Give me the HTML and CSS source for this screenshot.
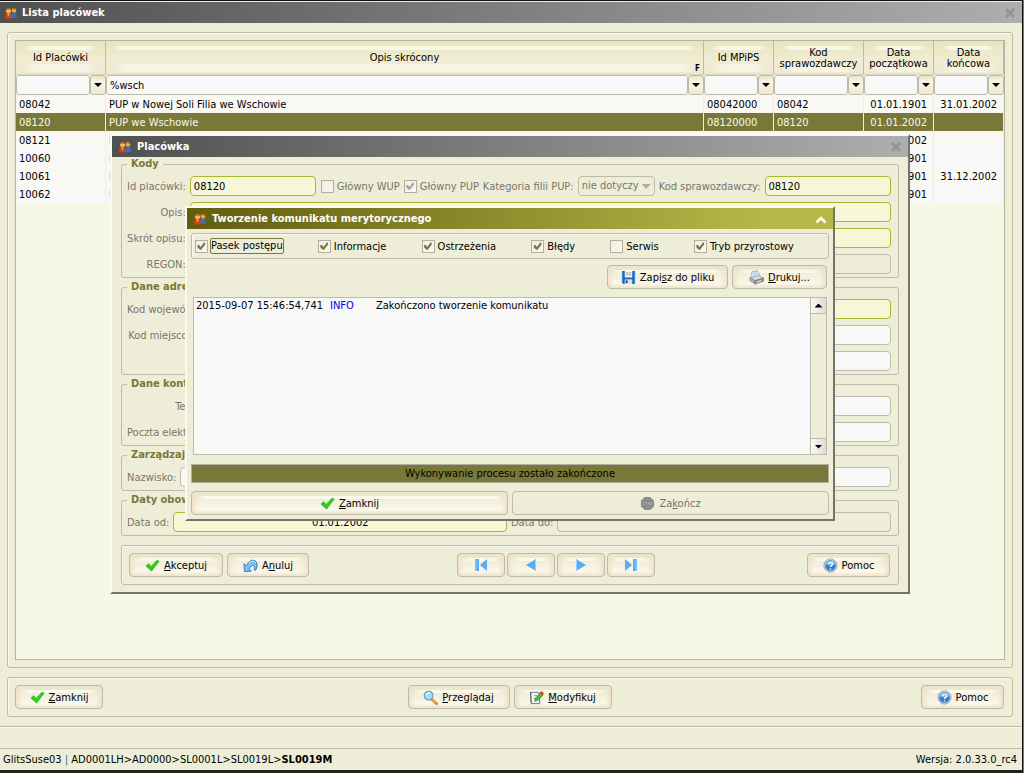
FILE: index.html
```html
<!DOCTYPE html>
<html lang="pl">
<head>
    <meta charset="UTF-8">
    <meta name="viewport" content="width=device-width, initial-scale=1.0">
    <title>Lista placówek</title>
    <link rel="stylesheet" href="styles.css">
</head>

<body>
    <!-- Shared icons -->
    <svg class="sprite" aria-hidden="true">
        <symbol id="people" viewBox="0 0 14 14">
            <path d="M7 12c0-4 1-5.500 3-5.500S13 8 13 12z" fill="#2c6fc4"/>
            <path d="M1 12.500c0-4 1-5.500 3.500-5.500S8 8.500 8 12.500z" fill="#d8401c"/>
            <path d="M3 7.500l1.500 3L6 7.500z" fill="#f6a03c"/>
            <circle cx="10" cy="4.500" r="2.300" fill="#e8a850"/>
            <circle cx="4.500" cy="4.500" r="2.600" fill="#f0b868"/>
            <path d="M1.800 4.500C1.500 1 7.500 1 7.200 4.500 6 3 4 3.500 1.800 4.500zM8 2.500C9 1 12.800 1 12.500 4.500 11.500 3 9.500 3.500 8 2.500z" fill="#b06414"/>
        </symbol>
        <symbol id="cross" viewBox="0 0 12 12">
            <path d="M2 2l8 8M10 2l-8 8" stroke="#959595" stroke-width="3"/>
        </symbol>
        <symbol id="check" viewBox="0 0 16 16">
            <path d="M1 8.500L4 6l2.500 3L13 2l2 1.500L7 14z" fill="#2fcf1c" stroke="#1fa514" stroke-width=".6"/>
        </symbol>
        <symbol id="undo" viewBox="0 0 16 16">
            <path d="M1 6l.5 8.500L9 14l-2.500-2.500L9 8.500c1.500-1.500 3-.5 3 1V13h1.500C15.500 10 15.500 6 14 4 11.500 1 7.500 2.500 5.500 5L3.500 8.500z" fill="#7cc0f4" stroke="#2a6cb4" stroke-width=".9"/>
            <path d="M6 5.500C8 3 11.500 2.500 13 5" fill="none" stroke="#c8e8fc"/>
        </symbol>
        <symbol id="lens" viewBox="0 0 16 16">
            <path d="M9.500 10l5 4.500" stroke="#e08a28" stroke-width="3" stroke-linecap="round"/>
            <path d="M10 10l4 3.500" stroke="#f8c878" stroke-width="1"/>
            <circle cx="6" cy="6" r="4.700" fill="#a4dcf8" stroke="#6a9cc8" stroke-width="1.200"/>
            <path d="M3.500 5.500C4 3.500 6 3 7.500 3.500" stroke="#fff" stroke-width="1.200" fill="none"/>
        </symbol>
        <symbol id="edit" viewBox="0 0 16 16">
            <path d="M1.500 2.500h9l1 12h-9z" fill="#f4f6f8" stroke="#66707c"/>
            <path d="M2 2v12" stroke="#444c58" stroke-width="1.500" stroke-dasharray="1 1"/>
            <path d="M5 6h4M5 9h2" stroke="#8aa0c0"/>
            <path d="M6 12l1-3.500L12.500 3 15 5.500 9 11z" fill="#44c030" stroke="#1f7a18" stroke-width=".7"/>
            <path d="M11.500 3L13 1l3 2.500-1.500 2z" fill="#dc3c20"/>
        </symbol>
        <symbol id="help" viewBox="0 0 16 16">
            <circle cx="8" cy="8" r="7" fill="#e4e8ec" stroke="#808890" stroke-width=".8"/>
            <circle cx="8" cy="8" r="5.700" fill="#2c80cc"/>
            <path d="M3 7a5 4.500 0 0 1 10 0C10 8.500 6 8.500 3 7z" fill="#6cb4ec"/>
            <path d="M5.800 6.500C6 4 10.500 4 10.200 6.500 10 8 8 7.800 8 9.500M8 10.800v1.500" fill="none" stroke="#fff" stroke-width="1.500"/>
        </symbol>
        <symbol id="floppy" viewBox="0 0 16 16">
            <path d="M1 1h14v14H2.500L1 13.500z" fill="#1868b8"/>
            <path d="M1.500 1.500v12M14.500 1.500v13" stroke="#4a98e0"/>
            <path d="M4 1h8v7H4z" fill="#f4f4f0"/>
            <path d="M5 3h6M5 5h6" stroke="#a8acb0"/>
            <path d="M4 10h8v5H4z" fill="#dce0e4"/>
            <path d="M5 11h2v3H5z" fill="#104888"/>
        </symbol>
        <symbol id="printer" viewBox="0 0 16 16">
            <path d="M3 8V2l6-1 3 6z" fill="#eaf6fc" stroke="#7898a8" stroke-width=".8"/>
            <path d="M4.500 3.500l4-.6M4.500 5.500l5-.7" stroke="#6cb8d8" stroke-width=".8"/>
            <path d="M1 8l10-2 4.500 2.500-9 3z" fill="#d8dadc" stroke="#808488" stroke-width=".6"/>
            <path d="M1 8l5.500 3.500V15L1 11.500z" fill="#b0b4b8" stroke="#70747a" stroke-width=".6"/>
            <path d="M6.500 11.500l9-3V12l-9 3z" fill="#8c9094" stroke="#606468" stroke-width=".6"/>
            <path d="M8 13l5-1.700" stroke="#e8f0a0" stroke-width="1.200"/>
        </symbol>
        <symbol id="stop" viewBox="0 0 16 16">
            <path d="M5 1h6l4 4v6l-4 4H5l-4-4V5z" fill="#8c8c8a"/>
            <path d="M3 7h2M3 9h2M6 7h2M7 7v3M9 7h1v2H9zM12 7h1v1h-1v2" stroke="#b0b0ae" stroke-width=".8" fill="none"/>
        </symbol>
        <symbol id="first" viewBox="0 0 14 14">
            <path d="M1 1h4v12H1zM13 1v12L6 7z" fill="#5cacf4"/>
            <path d="M2 1v12" stroke="#98d0fc"/>
        </symbol>
        <symbol id="prev" viewBox="0 0 14 14">
            <path d="M12 1v12L2 7z" fill="#5cacf4"/>
            <path d="M11.500 2v10" stroke="#98d0fc"/>
        </symbol>
    </svg>

    <div class="window">
        <header class="titlebar">
            <svg class="app-icon"><use href="#people"/></svg>
            <h1>Lista placówek</h1>
            <button class="close" aria-label="Zamknij okno" disabled><svg><use href="#cross"/></svg></button>
        </header>

        <section class="panel list-panel">
            <div class="grid-box">
                <table class="grid">
                    <thead>
                        <tr>
                            <th class="col-id">Id Placówki</th>
                            <th class="filtered">Opis skrócony</th>
                            <th class="col-mpips">Id MPiPS</th>
                            <th class="col-kod">Kod sprawozdawczy</th>
                            <th class="col-date">Data początkowa</th>
                            <th class="col-date">Data końcowa</th>
                        </tr>
                        <tr class="filters">
                            <td><div class="combo"><input type="text" aria-label="Filtr Id Placówki"><button aria-label="Lista Id Placówki"></button></div></td>
                            <td><div class="combo"><input type="text" value="%wsch" aria-label="Filtr Opis skrócony"><button aria-label="Lista Opis skrócony"></button></div></td>
                            <td><div class="combo"><input type="text" aria-label="Filtr Id MPiPS"><button aria-label="Lista Id MPiPS"></button></div></td>
                            <td><div class="combo"><input type="text" aria-label="Filtr Kod sprawozdawczy"><button aria-label="Lista Kod sprawozdawczy"></button></div></td>
                            <td><div class="combo"><input type="text" aria-label="Filtr Data początkowa"><button aria-label="Lista Data początkowa"></button></div></td>
                            <td><div class="combo"><input type="text" aria-label="Filtr Data końcowa"><button aria-label="Lista Data końcowa"></button></div></td>
                        </tr>
                    </thead>
                    <tbody>
                        <tr><td>08042</td><td>PUP w Nowej Soli Filia we Wschowie</td><td>08042000</td><td>08042</td><td class="date">01.01.1901</td><td class="date">31.01.2002</td></tr>
                        <tr class="selected"><td>08120</td><td>PUP we Wschowie</td><td>08120000</td><td>08120</td><td class="date">01.01.2002</td><td></td></tr>
                        <tr><td>08121</td><td>PUP</td><td></td><td></td><td class="date">01.01.2002</td><td></td></tr>
                        <tr><td>10060</td><td>PUP</td><td></td><td></td><td class="date">01.01.1901</td><td></td></tr>
                        <tr><td>10061</td><td>PUP</td><td></td><td></td><td class="date">01.01.1901</td><td class="date">31.12.2002</td></tr>
                        <tr><td>10062</td><td>PUP</td><td></td><td></td><td class="date">01.01.1901</td><td></td></tr>
                    </tbody>
                </table>
            </div>
        </section>

        <section class="panel toolbar">
            <div class="group">
                <button class="btn w-88"><svg><use href="#check"/></svg><span><u>Z</u>amknij</span></button>
            </div>
            <div class="group">
                <button class="btn w-102"><svg><use href="#lens"/></svg><span><u>P</u>rzeglądaj</span></button>
                <button class="btn w-98"><svg><use href="#edit"/></svg><span><u>M</u>odyfikuj</span></button>
            </div>
            <div class="group end">
                <button class="btn w-83"><svg><use href="#help"/></svg><span>Pomoc</span></button>
            </div>
        </section>

        <div class="message-bar"></div>
        <footer class="status">
            <span>GlitsSuse03 <i>|</i> AD0001LH&gt;AD0000&gt;SL0001L&gt;SL0019L&gt;<b>SL0019M</b></span>
            <span>Wersja: 2.0.33.0_rc4</span>
        </footer>
    </div>

    <!-- Facility form -->
    <div class="dialog facility" role="dialog" aria-labelledby="facility-title">
        <header class="titlebar">
            <svg class="app-icon"><use href="#people"/></svg>
            <h2 id="facility-title">Placówka</h2>
            <button class="close" aria-label="Zamknij placówkę" disabled><svg><use href="#cross"/></svg></button>
        </header>
        <div class="facility-body">
            <fieldset>
                <legend>Kody</legend>
                <div class="fields">
                    <label for="id">Id placówki:</label>
                    <div class="line">
                        <input class="text required code" type="text" id="id" value="08120">
                        <label class="tick"><input type="checkbox" disabled><span>Główny WUP</span></label>
                        <label class="tick"><input type="checkbox" checked disabled><span>Główny PUP</span></label>
                        <label for="kat">Kategoria filii PUP:</label>
                        <div class="select">
                            <select id="kat" disabled><option>nie dotyczy</option></select>
                        </div>
                        <label for="kod">Kod sprawozdawczy:</label>
                        <input class="text required grow" type="text" id="kod" value="08120">
                    </div>
                    <label for="opis">Opis:</label>
                    <input class="text required" type="text" id="opis">
                    <label for="skrot">Skrót opisu:</label>
                    <input class="text required" type="text" id="skrot">
                    <label for="regon">REGON:</label>
                    <input class="text" type="text" id="regon" disabled>
                </div>
            </fieldset>
            <fieldset>
                <legend>Dane adresowe</legend>
                <div class="fields">
                    <label for="woj">Kod województwa:</label>
                    <input class="text required" type="text" id="woj">
                    <label for="miejsc">Kod miejscowości:</label>
                    <input class="text" type="text" id="miejsc">
                    <label for="ulica">Ulica:</label>
                    <input class="text" type="text" id="ulica">
                </div>
            </fieldset>
            <fieldset>
                <legend>Dane kontaktowe</legend>
                <div class="fields">
                    <label for="tel">Telefon/fax:</label>
                    <input class="text" type="text" id="tel">
                    <label for="mail">Poczta elektroniczna:</label>
                    <input class="text" type="text" id="mail">
                </div>
            </fieldset>
            <fieldset>
                <legend>Zarządzający</legend>
                <div class="fields">
                    <label for="nazw">Nazwisko:</label>
                    <input class="text" type="text" id="nazw" value="P">
                </div>
            </fieldset>
            <fieldset>
                <legend>Daty obowiązywania</legend>
                <div class="dates">
                    <label for="od">Data od:</label>
                    <input class="text required centered" type="text" id="od" value="01.01.2002">
                    <label for="do">Data do:</label>
                    <input class="text" type="text" id="do" disabled>
                </div>
            </fieldset>
            <div class="panel toolbar">
                <div class="group">
                    <button class="btn w-94"><svg><use href="#check"/></svg><span><u>A</u>kceptuj</span></button>
                    <button class="btn w-82"><svg><use href="#undo"/></svg><span>A<u>n</u>uluj</span></button>
                </div>
                <div class="group tight">
                    <button class="btn nav" aria-label="Pierwszy"><svg><use href="#first"/></svg></button>
                    <button class="btn nav" aria-label="Poprzedni"><svg><use href="#prev"/></svg></button>
                    <button class="btn nav flip" aria-label="Następny"><svg><use href="#prev"/></svg></button>
                    <button class="btn nav flip" aria-label="Ostatni"><svg><use href="#first"/></svg></button>
                </div>
                <div class="group end">
                    <button class="btn w-83"><svg><use href="#help"/></svg><span>Pomoc</span></button>
                </div>
            </div>
        </div>
    </div>

    <!-- Process log -->
    <div class="dialog process" role="dialog" aria-labelledby="process-title">
        <header class="titlebar active">
            <svg class="app-icon"><use href="#people"/></svg>
            <h2 id="process-title">Tworzenie komunikatu merytorycznego</h2>
            <button class="close" aria-label="Zwiń">
                <svg viewBox="0 0 12 12"><path d="M1.500 9.500L6 5l4.500 4.500" fill="none" stroke="#fff" stroke-width="2.500"/></svg>
            </button>
        </header>
        <div class="process-body">
            <div class="panel ticks">
                <label class="tick"><input type="checkbox" checked><span class="focused">Pasek postępu</span></label>
                <label class="tick"><input type="checkbox" checked><span>Informacje</span></label>
                <label class="tick"><input type="checkbox" checked><span>Ostrzeżenia</span></label>
                <label class="tick"><input type="checkbox" checked><span>Błędy</span></label>
                <label class="tick"><input type="checkbox"><span>Serwis</span></label>
                <label class="tick"><input type="checkbox" checked><span>Tryb przyrostowy</span></label>
            </div>
            <div class="log-actions">
                <button class="btn w-121"><svg><use href="#floppy"/></svg><span>Zapi<u>s</u>z do pliku</span></button>
                <button class="btn w-95"><svg><use href="#printer"/></svg><span><u>D</u>rukuj...</span></button>
            </div>
            <div class="log">
                <div class="log-lines">
                    <div class="log-line">
                        <time>2015-09-07 15:46:54,741</time>
                        <span class="level">INFO</span>
                        <span>Zakończono tworzenie komunikatu</span>
                    </div>
                </div>
                <div class="scrollbar">
                    <button class="up" aria-label="W górę"></button>
                    <button class="down" aria-label="W dół"></button>
                </div>
            </div>
            <div class="progress">Wykonywanie procesu zostało zakończone</div>
            <div class="bottom-actions">
                <button class="btn"><svg><use href="#check"/></svg><span><u>Z</u>amknij</span></button>
                <button class="btn" disabled><svg><use href="#stop"/></svg><span>Za<u>k</u>ończ</span></button>
            </div>
        </div>
    </div>
</body>
</html>
```
FILE: styles.css
```css
* {
    box-sizing: border-box;
}
body {
    margin: 0;
    background-color: #77777c;
    color: #000;
    font-family: "DejaVu Sans Condensed", "DejaVu Sans", sans-serif;
    font-size: 11px;
    line-height: 14px;
}
input, button, select {
    font: inherit;
    color: inherit;
    margin: 0;
}
.sprite {
    position: absolute;
    width: 0;
    height: 0;
}

/* Main window */
.window {
    display: flex;
    flex-direction: column;
    min-height: 100vh;
    margin-right: 1px;
    padding-top: 1px;
    border-top: 1px solid #111;
    border-right: 1px solid #111;
    border-bottom: 3px solid #222;
    background-color: #eeeed8;
}
.titlebar {
    display: flex;
    align-items: center;
    gap: 4px;
    height: 21px;
    padding: 0 6px 0 4px;
    background: linear-gradient(90deg, #505050, #aeaeae);
    color: #fff;
}
.titlebar.active {
    background: linear-gradient(90deg, #625c10, #b8b848 90%);
}
.titlebar h1, .titlebar h2 {
    flex: 1;
    margin: 0;
    font-size: 11px;
    font-weight: bold;
}
.app-icon {
    width: 14px;
    height: 14px;
}
.close {
    padding: 0;
    border: 0;
    background: none;
    line-height: 0;
}
.close svg {
    width: 12px;
    height: 12px;
}
.panel {
    border: 1px solid #bcbcaa;
    border-radius: 3px;
    box-shadow: inset 1px 1px 0 #fafaf0;
}
.window > .panel {
    margin: 9px 9px 0 7px;
}
.list-panel {
    display: flex;
    flex: 1;
    padding: 7px;
}
.grid-box {
    flex: 1;
    border: 1px solid #b4b4a2;
    background-color: #f7f7e6;
}

/* Facility list */
.grid {
    width: 100%;
    border-collapse: separate;
    border-spacing: 0;
    table-layout: fixed;
}
.col-id, .col-kod {
    width: 90px;
}
.col-mpips, .col-date {
    width: 70px;
}
.grid th {
    position: relative;
    height: 34px;
    padding: 0 4px;
    border-right: 1px solid #bcbcaa;
    border-bottom: 1px solid #d8d6c0;
    background:
        linear-gradient(90deg, transparent, #f8f7ea 10px, #f8f7ea calc(100% - 10px), transparent) center 5px / calc(100% - 14px) 4px no-repeat,
        linear-gradient(90deg, transparent, #f7f4e4 12px, #f7f4e4 calc(100% - 12px), transparent) center 23px / calc(100% - 14px) 8px no-repeat,
        linear-gradient(#e6e6be, #f1ecd4 60%, #efe8d0);
    font-weight: normal;
    line-height: 11px;
}
/* mark of a column with an active filter */
.filtered::after {
    content: "F";
    position: absolute;
    right: 3px;
    bottom: 0;
    font-size: 8px;
    font-weight: bold;
}
.grid td {
    height: 18px;
    padding: 2px 3px 0;
    border-right: 1px solid #f0eedc;
    white-space: nowrap;
    overflow: hidden;
}
.grid .filters td {
    height: 20px;
    padding: 0;
    border-right: 0;
}
.grid tbody tr {
    background-color: #f8f8f8;
}
.grid tbody tr:nth-child(odd) {
    background-color: #f9f8f2;
}
.grid tbody .selected {
    background-color: #797838;
    color: #f8f8ea;
}
.grid .date {
    padding-right: 6px;
    text-align: right;
}
.combo {
    display: flex;
}
.combo input {
    flex: 1;
    min-width: 0;
    height: 20px;
    padding: 0 3px;
    border: 1px solid #bcbcaa;
    border-radius: 3px;
    background-color: #f8f8f8;
}
.combo button {
    width: 16px;
    height: 20px;
    padding: 0;
    border: 1px solid #bcbcaa;
    border-radius: 3px;
    background: linear-gradient(#e9e6c6, #f8f2e4 30%, #f0ead0);
}
.combo button::after, .scrollbar button::after {
    content: "";
    display: block;
    width: 8px;
    height: 4px;
    margin: 0 auto;
    background-color: #000;
    clip-path: polygon(0 0, 100% 0, 50% 100%);
}
.scrollbar .up::after {
    clip-path: polygon(0 100%, 100% 100%, 50% 0);
}

/* Buttons */
.toolbar {
    display: grid;
    grid-template-columns: 1fr auto 1fr;
    padding: 7px 8px 7px 7px;
}
.group {
    display: flex;
    gap: 4px;
}
.tight {
    gap: 2px;
}
.end {
    justify-content: flex-end;
}
.btn {
    display: flex;
    align-items: center;
    justify-content: center;
    gap: 4px;
    height: 24px;
    padding: 0;
    border: 1px solid #bcbaa8;
    border-radius: 4px;
    background:
        linear-gradient(90deg, transparent, #faf9ee 8px, #faf9ee calc(100% - 8px), transparent) center 4px / calc(100% - 10px) 3px no-repeat,
        linear-gradient(#e9e7c6, #f4f0dc 45%, #faf7ec 80%, #f2ecd8);
    box-shadow: inset 3px 0 4px #eee2c8, inset -3px 0 4px #eee2c8;
    white-space: nowrap;
}
.btn span, .fields label, .dates label, .tick span {
    padding-top: 2px;
}
.btn svg {
    width: 15px;
    height: 15px;
}
.btn:disabled {
    background: none;
    box-shadow: none;
    color: #77756c;
}
.nav {
    width: 48px;
}
.nav svg {
    width: 14px;
    height: 14px;
}
.flip svg {
    transform: scaleX(-1);
}
.w-82 {
    width: 82px;
}
.w-83 {
    width: 83px;
}
.w-88 {
    width: 88px;
}
.w-94 {
    width: 94px;
}
.w-95 {
    width: 95px;
}
.w-98 {
    width: 98px;
}
.w-102 {
    width: 102px;
}
.w-121 {
    width: 121px;
}

/* Status bar */
.message-bar {
    height: 23px;
    margin-top: 9px;
    border-top: 1px solid #bcbcaa;
    border-bottom: 1px solid #bcbcaa;
    box-shadow: inset 0 1px 0 #fafaf0;
}
.status {
    display: flex;
    justify-content: space-between;
    padding: 4px 5px 3px 3px;
}
.status i {
    color: #2a70a0;
    font-style: normal;
}

/* Dialogs */
.dialog {
    position: absolute;
    border: 2px solid #fafaf0;
    border-right-color: #77736a;
    border-bottom-color: #77736a;
    background-color: #eeeed8;
}
.facility {
    left: 110px;
    top: 134px;
    width: 800px;
}
.dialog .titlebar {
    gap: 5px;
    padding-left: 6px;
}
.facility-body {
    padding: 0 9px 7px;
    color: #77756c;
}
.facility-body .btn {
    color: #000;
}
fieldset {
    min-width: 0;
    margin: 0 0 2px;
    padding: 5px 7px 3px 5px;
    border: 1px solid #bcbcaa;
    border-radius: 3px;
}
legend {
    padding: 0 4px;
    color: #7a7838;
    font-weight: bold;
}
.fields {
    display: grid;
    grid-template-columns: auto 1fr;
    align-items: center;
    gap: 6px 4px;
}
.fields > label {
    text-align: right;
    white-space: nowrap;
}
.line {
    display: flex;
    align-items: center;
    gap: 4px;
    min-width: 0;
    white-space: nowrap;
}
.dates {
    display: flex;
    align-items: center;
    gap: 4px;
}
.dates .text {
    flex: 1;
}
.text {
    width: 100%;
    min-width: 0;
    height: 20px;
    padding: 0 3px;
    border: 1px solid #bcbcaa;
    border-radius: 4px;
    background-color: #f8f8f8;
    color: #000;
}
.text:disabled {
    background-color: #eeeed8;
}
.required {
    border-color: #a8b830;
    background-color: #f7f7d8;
}
.centered {
    text-align: center;
}
.line .code {
    width: 126px;
    margin-right: 1px;
}
.line .grow {
    flex: 1;
}
.select {
    position: relative;
}
.select select {
    width: 77px;
    height: 20px;
    padding: 0 3px;
    border: 1px solid #bcbcaa;
    border-radius: 4px;
    appearance: none;
    background: none;
    color: #77756c;
    opacity: 1;
}
.select::after {
    content: "";
    position: absolute;
    right: 4px;
    top: 8px;
    width: 9px;
    height: 5px;
    background-color: #b0b0a0;
    clip-path: polygon(0 0, 100% 0, 50% 100%);
}
.tick {
    display: flex;
    align-items: center;
    gap: 3px;
    white-space: nowrap;
}
.fields .tick {
    padding-top: 0;
}
.tick input {
    width: 13px;
    height: 13px;
    border: 1px solid #b0b0a0;
    appearance: none;
    background: linear-gradient(135deg, #f4ecdc, #faf8f4);
}
.tick input:checked::before {
    content: "";
    display: block;
    width: 9px;
    height: 9px;
    margin: 1px;
    background-color: #77754a;
    clip-path: polygon(6% 40%, 24% 40%, 40% 60%, 82% 6%, 94% 30%, 44% 94%, 30% 90%, 6% 66%);
}
.tick input:disabled::before {
    background-color: #a4a498;
}
.facility .toolbar {
    grid-template-columns: 7fr auto 5fr;
    margin-top: 9px;
}

/* Process dialog */
.process {
    left: 185px;
    top: 206px;
    width: 650px;
}
.process-body {
    padding: 4px;
}
.ticks {
    display: flex;
    justify-content: space-between;
    height: 26px;
    padding: 0 34px 0 3px;
}
.tick .focused {
    padding: 0;
    outline: 1px solid #7a7838;
    border-radius: 1px;
}
.log-actions {
    display: flex;
    justify-content: flex-end;
    gap: 4px;
    padding: 6px 2px 8px;
}
.log {
    display: flex;
    height: 158px;
    margin: 0 2px;
    border: 1px solid #bcbcaa;
    background-color: #f8f8f8;
}
.log-lines {
    flex: 1;
}
.log-line {
    display: flex;
    padding: 1px 2px;
}
.log-line time {
    width: 134px;
}
.level {
    width: 46px;
    color: #0000f0;
}
.scrollbar {
    display: flex;
    flex-direction: column;
    justify-content: space-between;
    width: 16px;
    border-left: 1px solid #bcbcaa;
    background-color: #eeeed8;
}
.scrollbar button {
    height: 16px;
    padding: 0;
    border: 0;
    border-bottom: 1px solid #bcbcaa;
    background: linear-gradient(90deg, #fbfaf2, #dcdad6);
}
.scrollbar .down {
    border-top: 1px solid #bcbcaa;
    border-bottom: 0;
}
.progress {
    height: 19px;
    margin: 9px 0 8px;
    border: 1px solid #b0b0a0;
    background-color: #797838;
    line-height: 17px;
    text-align: center;
}
.bottom-actions {
    display: flex;
    gap: 4px;
}
.bottom-actions .btn {
    flex: 1;
}
```
